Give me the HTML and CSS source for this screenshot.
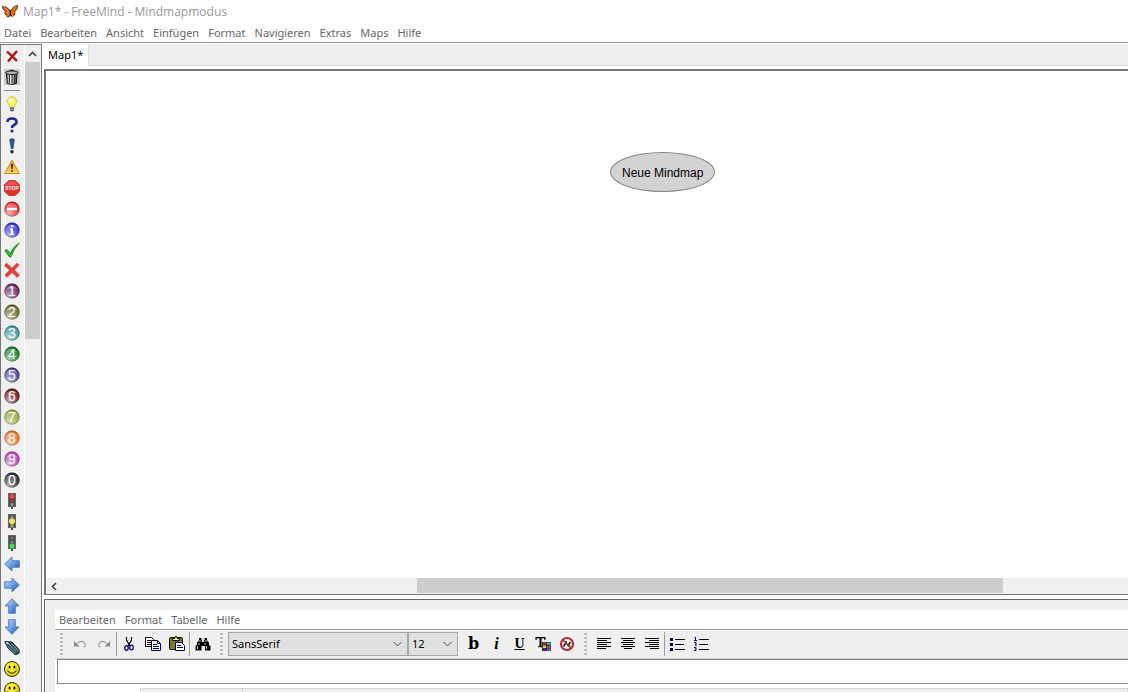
FILE: index.html
```html
<!DOCTYPE html>
<html lang="de">
<head>
<meta charset="utf-8">
<title>Map1* - FreeMind - Mindmapmodus</title>
<link rel="stylesheet" href="styles.css">
</head>
<body>
<svg class="defs" aria-hidden="true">
  <defs>
    <linearGradient id="blue" x1="0" y1="0" x2="1" y2="1"><stop offset="0" stop-color="#c4dcf8"/><stop offset=".5" stop-color="#6c9fe4"/><stop offset="1" stop-color="#1d4fae"/></linearGradient>
    <radialGradient id="shine" cx=".3" cy=".8" r=".8"><stop offset="0" stop-color="#fff" stop-opacity=".65"/><stop offset="1" stop-color="#fff" stop-opacity="0"/></radialGradient>
    <radialGradient id="smile" cx=".4" cy=".35" r=".7"><stop offset="0" stop-color="#fff94a"/><stop offset="1" stop-color="#d9c800"/></radialGradient>
    <linearGradient id="warn" x1="0" y1="0" x2="0" y2="1"><stop offset="0" stop-color="#e88a1c"/><stop offset="1" stop-color="#ffdf5a"/></linearGradient>
    <linearGradient id="can" x1="0" y1="0" x2="1" y2="0"><stop offset="0" stop-color="#666"/><stop offset=".35" stop-color="#fff"/><stop offset="1" stop-color="#333"/></linearGradient>
    <symbol id="ball" viewBox="0 0 16 16"><circle cx="8" cy="8" r="7.6" fill="currentColor"/><circle cx="8" cy="8" r="7.6" fill="url(#shine)"/><circle cx="8" cy="8" r="7.2" fill="none" stroke="#000" stroke-opacity=".22"/><path d="M2.4 6.6a6 6 0 0 1 11.2 0Q8 4.5 2.400 6.600z" fill="#fff" fill-opacity=".25"/></symbol>
    <symbol id="arrow" viewBox="0 0 16 16"><path d="M.7 8 8 1v3.700h7.300v6.600H8V15z" fill="url(#blue)" stroke="#3f6fb8" stroke-width=".8"/></symbol>
    <symbol id="lamp" viewBox="0 0 16 16"><path d="M4 0h8v14h-3v2h-2v-2h-3z" fill="#4a4a4a"/><path d="M4.500 .5h7v13h-7z" fill="none" stroke="#777" stroke-width=".7"/></symbol>
    <symbol id="face" viewBox="0 0 16 16"><circle cx="8" cy="8" r="7.500" fill="url(#smile)" stroke="#37340a"/><ellipse cx="5.600" cy="6" rx="1" ry="1.500"/><ellipse cx="10.400" cy="6" rx="1" ry="1.500"/><path d="M3.500 9.500q4.500 5.500 9 0" fill="none" stroke="#222" stroke-width="1.100"/></symbol>
  </defs>
</svg>

<header class="titlebar">
  <svg class="icon" viewBox="0 0 16 16"><path d="M8.500 7Q5 2 .3 2.500q.2 3.500 2.700 4.500Q2 9.500 5 12.500q2 1.500 3.500-1 1.500 1.500 3 .5 2-2 1.500-4.500Q15.500 5.500 15.800 1.500 11 2 8.500 7z" fill="#cf5c1e" stroke="#5a2c12" stroke-width=".8"/><path d="M2 3.500 7 8M14 3 9.500 8M4 8.500l3 .500M12.500 8 9.500 9M5.500 12 7 9.500M11 12 9.500 9.500" stroke="#f5a14b" stroke-width=".8"/><path d="M8.300 6v6" stroke="#2b1509" stroke-width="1.200"/></svg>
  <h1>Map1* - FreeMind - Mindmapmodus</h1>
</header>
<nav class="menu main-menu">
  <button>Datei</button><button>Bearbeiten</button><button>Ansicht</button><button>Einfügen</button><button>Format</button><button>Navigieren</button><button>Extras</button><button>Maps</button><button>Hilfe</button>
</nav>

<div class="workspace">
  <aside class="palette">
    <div class="palette-icons">
      <button aria-label="Letztes Icon entfernen"><svg class="icon" viewBox="0 0 16 16"><path d="M3 3.500 13 13M13 3 4 13.500" stroke="#b50d0d" stroke-width="2.400"/></svg></button>
      <button aria-label="Alle Icons entfernen"><svg class="icon" viewBox="0 0 16 16"><path d="M0 0h16v16H0z" fill="#ccc"/><path d="M2.500 4.500h10.500l-.700 10q-4.500 2-9 0z" fill="url(#can)" stroke="#111"/><path d="M5.500 6v8M8 6v8.500M10.500 6v8" stroke="#333"/><ellipse cx="7.800" cy="3.700" rx="6.300" ry="1.800" fill="#bbb" stroke="#111"/><path d="M5.500 2q2-2 4.500 0" fill="none" stroke="#111"/></svg></button>
      <hr>
      <button aria-label="Idee"><svg class="icon" viewBox="0 0 16 16"><path d="M8 .5a4.900 4.900 0 0 1 3 8.500l-.8 2H5.800L5 9A4.900 4.900 0 0 1 8 .5z" fill="#fbf46b" stroke="#c9b92e" stroke-width=".8"/><circle cx="6.500" cy="4" r="1.700" fill="#fff"/><path d="M6 11h4v4q-2 1.500-4 0z" fill="#999"/><path d="M6 12.500h4M6 14.500h4" stroke="#555" stroke-width=".7"/></svg></button>
      <button aria-label="Frage"><svg class="icon" viewBox="0 0 16 16"><path d="M3.500 5Q3.500 1.500 8 1.500T12.500 5Q12.500 7 10 8 8 9 8 11" fill="none" stroke="#1a2f85" stroke-width="2.600"/><circle cx="8" cy="14" r="1.600" fill="#1a2f85"/></svg></button>
      <button aria-label="Wichtig"><svg class="icon" viewBox="0 0 16 16"><path d="M5.700 1.500Q8 0 10.300 1.500L9 10.500H7.300z" fill="#235c9e" stroke="#173768" stroke-width=".7"/><circle cx="8" cy="13.700" r="1.800" fill="#163565"/></svg></button>
      <button aria-label="Warnung"><svg class="icon" viewBox="0 0 16 16"><path d="M8 1.200 15.400 14.500H.6z" fill="url(#warn)" stroke="#d78a16" stroke-linejoin="round"/><path d="M7 5h2l-.4 5H7.400zM7.200 11.200h1.700v1.700H7.200z" fill="#222"/></svg></button>
      <button aria-label="Stop"><svg class="icon" viewBox="0 0 16 16"><path d="M4.800.5h6.400l4.300 4.300v6.400l-4.300 4.300H4.800L.5 11.200V4.800z" fill="#e22f2b" stroke="#bd3a36"/><path d="M1.500 5 5 1.500h6L14.500 5z" fill="#fff" fill-opacity=".2"/><text x="8" y="10" class="stop">STOP</text></svg></button>
      <button aria-label="Gesperrt"><svg class="icon red"><use href="#ball"/><path d="M3 6.700h10v2.600H3z" fill="#fff"/></svg></button>
      <button aria-label="Info"><svg class="icon info"><use href="#ball"/><path d="M7 3h2.300v2H7zM6 6.300h3v5.200h1V13H6v-1.500h1V7.800H6z" fill="#fff"/></svg></button>
      <button class="short" aria-label="OK"><svg class="icon" viewBox="0 0 16 16"><path d="M.8 8.500 3 7.500l3 4Q9 5 15.300.8 9.500 7 7 15H5.500z" fill="#2fb62f" stroke="#128012" stroke-width=".8"/></svg></button>
      <button class="short" aria-label="Nicht OK"><svg class="icon" viewBox="0 0 16 16"><path d="M2.500 1 8 6.200 13 1l2.200 2L10.500 8l5 5-2.300 2.500L8 10.500 3 15.300.8 13 5.500 8 .5 3.500z" fill="#e83b3b" stroke="#cf4545" stroke-width=".6"/></svg></button>
      <button aria-label="Priorität 1"><svg class="icon n1"><use href="#ball"/><text x="8" y="13">1</text></svg></button>
      <button aria-label="Priorität 2"><svg class="icon n2"><use href="#ball"/><text x="8" y="13">2</text></svg></button>
      <button aria-label="Priorität 3"><svg class="icon n3"><use href="#ball"/><text x="8" y="13">3</text></svg></button>
      <button aria-label="Priorität 4"><svg class="icon n4"><use href="#ball"/><text x="8" y="13">4</text></svg></button>
      <button aria-label="Priorität 5"><svg class="icon n5"><use href="#ball"/><text x="8" y="13">5</text></svg></button>
      <button aria-label="Priorität 6"><svg class="icon n6"><use href="#ball"/><text x="8" y="13">6</text></svg></button>
      <button aria-label="Priorität 7"><svg class="icon n7"><use href="#ball"/><text x="8" y="13">7</text></svg></button>
      <button aria-label="Priorität 8"><svg class="icon n8"><use href="#ball"/><text x="8" y="13">8</text></svg></button>
      <button aria-label="Priorität 9"><svg class="icon n9"><use href="#ball"/><text x="8" y="13">9</text></svg></button>
      <button aria-label="Priorität 0"><svg class="icon n0"><use href="#ball"/><text x="8" y="13">0</text></svg></button>
      <button aria-label="Ampel rot"><svg class="icon"><use href="#lamp"/><circle cx="8" cy="3.200" r="2.500" fill="#f04545"/><circle cx="8" cy="7.500" r="1.500" fill="#b33"/><circle cx="8" cy="11.300" r="1.500" fill="#79a5a8"/></svg></button>
      <button aria-label="Ampel gelb"><svg class="icon"><use href="#lamp"/><circle cx="8" cy="3" r="1.500" fill="#999"/><circle cx="8" cy="7.200" r="3" fill="#f2e65c"/><circle cx="8" cy="11.700" r="1.700" fill="#aaa15a"/></svg></button>
      <button aria-label="Ampel grün"><svg class="icon"><use href="#lamp"/><circle cx="8" cy="3" r="1.600" fill="#777"/><circle cx="8" cy="7" r="1.600" fill="#6d8a6d"/><circle cx="8" cy="11" r="2.600" fill="#3fdb52"/></svg></button>
      <button aria-label="Zurück"><svg class="icon"><use href="#arrow"/></svg></button>
      <button aria-label="Vor"><svg class="icon" viewBox="0 0 16 16"><path d="M15.300 8 8 1v3.700H.7v6.600H8V15z" fill="url(#blue)" stroke="#3f6fb8" stroke-width=".8"/></svg></button>
      <button aria-label="Hoch"><svg class="icon" viewBox="0 0 16 16"><path d="M8 .7 15 8h-3.700v7.300H4.700V8H1z" fill="url(#blue)" stroke="#3f6fb8" stroke-width=".8"/></svg></button>
      <button aria-label="Runter"><svg class="icon" viewBox="0 0 16 16"><path d="M8 15.300 15 8h-3.700V.7H4.700V8H1z" fill="url(#blue)" stroke="#3f6fb8" stroke-width=".8"/></svg></button>
      <button aria-label="Anhang"><svg class="icon" viewBox="0 0 16 16"><path d="M.8 1.500 8 2l7 7.500q1.500 5-4 5L4 8z" fill="#274b52" stroke="#162f34"/><path d="M4.500 3.500 12.500 12M7.500 3.500l7 7.500M4 6.500l7 7" stroke="#9cc0c2" stroke-width=".9"/><path d="m1.500 2 3 .500L4.200 5z" fill="#e5eeee"/></svg></button>
      <button aria-label="Lächeln"><svg class="icon"><use href="#face"/></svg></button>
      <button aria-label="Freude"><svg class="icon"><use href="#face"/></svg></button>
    </div>
    <div class="vscroll">
      <button aria-label="Nach oben"><svg width="9" height="6" viewBox="0 0 9 6"><path d="M1 5 4.500 1.500 8 5" fill="none" stroke="#444" stroke-width="1.700"/></svg></button>
      <div class="vtrack"><div class="vthumb"></div></div>
    </div>
  </aside>

  <main class="documents">
    <div class="tabs"><button class="tab">Map1*</button></div>
    <section class="map-pane">
      <div class="canvas"><div class="node">Neue Mindmap</div></div>
      <div class="hscroll">
        <button aria-label="Nach links"><svg width="6" height="9" viewBox="0 0 6 9"><path d="M5 1 1.500 4.500 5 8" fill="none" stroke="#444" stroke-width="1.700"/></svg></button>
        <div class="htrack"><div class="hthumb"></div></div>
      </div>
    </section>

    <section class="editor">
      <nav class="menu note-menu"><button>Bearbeiten</button><button>Format</button><button>Tabelle</button><button>Hilfe</button></nav>
      <div class="toolbar">
        <span class="grip"></span>
        <button aria-label="Rückgängig"><svg class="icon" viewBox="0 0 16 16"><path d="M4 8q4-4 8-2Q15 8 12 11.500" fill="none" stroke="#8c8c8c"/><path d="M2 5v5.500h5.500z" fill="#8c8c8c"/></svg></button>
        <button aria-label="Wiederholen"><svg class="icon" viewBox="0 0 16 16"><path d="M12 8Q8 4 4 6 1 8 4 11.500" fill="none" stroke="#8c8c8c"/><path d="M14 5v5.500H8.500z" fill="#8c8c8c"/></svg></button>
        <span class="sep"></span>
        <button aria-label="Ausschneiden"><svg class="icon" viewBox="0 0 16 16"><path d="M5.500 1v3L9 10M10.500 1v3L7 10" fill="none" stroke="#000" stroke-width="1.200"/><ellipse cx="5.500" cy="12" rx="1.800" ry="2.300" fill="none" stroke="#00007c" stroke-width="1.200"/><ellipse cx="10.500" cy="11.500" rx="1.800" ry="2.300" fill="none" stroke="#00007c" stroke-width="1.200"/></svg></button>
        <button aria-label="Kopieren"><svg class="icon" viewBox="0 0 16 16"><path d="M.5 1.500h6l2 2v7h-8z" fill="#fff" stroke="#000"/><path d="M2 4.500h4M2 6.500h4M2 8.500h4" stroke="#000"/><path d="M6.500 4.500h6l3 3v7h-9z" fill="#fff" stroke="#00007c"/><path d="M12.500 4.500v3h3M8 8.500h4M8 10.500h6M8 12.500h6" fill="none" stroke="#00007c"/></svg></button>
        <button aria-label="Einfügen"><svg class="icon" viewBox="0 0 16 16"><rect x=".5" y="1.500" width="13" height="12" rx="1" fill="#7c7c16" stroke="#000"/><path d="M3.500 3.500v-1h2q0-2 1.500-2t1.500 2h2v2h-7z" fill="#e8e58a" stroke="#000"/><path d="M6.500 6.500h6l3 3v5h-9z" fill="#fff" stroke="#00007c"/><path d="M8 9.500h4M8 11.500h6" stroke="#00007c"/></svg></button>
        <span class="sep"></span>
        <button class="find" aria-label="Suchen"><svg class="icon" viewBox="0 0 16 16"><path d="M4 2h2.500v2H7v2h2V4h.5V2H12v2l1 2h1v3l1.500 1v4.500H10V10H6.500v4.500H.5V10L2 9V6h1l1-2z"/><path d="M5 4v2M4 7v2M2.500 10v3M11 4v2M10 7v2M11.500 10v3" stroke="#fff" stroke-width=".8"/></svg></button>
        <span class="grip"></span>
        <div class="combos">
          <select class="font-family" aria-label="Schriftart"><option>SansSerif</option></select>
          <select class="font-size" aria-label="Schriftgröße"><option>12</option></select>
        </div>
        <button class="letter bold">b</button>
        <button class="letter italic">i</button>
        <button class="letter under">U</button>
        <button aria-label="Schriftfarbe"><svg class="icon" viewBox="0 0 16 16"><path d="M.500 1h10v3H9.500L9 2.300H6.500V10L8 10.500V11.300H3v-.8L4.500 10V2.300H2L1.500 4h-1z"/><path d="M7 6h9v9H7z" fill="#333"/><path d="M8 6.500h3v2H8z" fill="#d22"/><path d="M12 6.500h3.500v2.500H12z" fill="#29b8b8"/><path d="M8 9.500h3V12H8z" fill="#e8d926"/><path d="M12 10h3.500v2H12z" fill="#b23c80"/><path d="M8 12.500h3V15H8z" fill="#2b2b9c"/><path d="M12 12.500h3.500V15H12z" fill="#8a45b8"/></svg></button>
        <button aria-label="Formatierung entfernen"><svg class="icon" viewBox="0 0 16 16"><circle cx="8" cy="8" r="6" fill="#fff" stroke="#b72d35" stroke-width="2.200"/><path d="M4.500 10.500 7.500 6M8.500 10l3-4M6 6h2M9 10h2" stroke="#111" stroke-width="1.500"/><path d="m4 4 8 8" stroke="#b72d35" stroke-width="1.700"/></svg></button>
        <span class="grip"></span>
        <button aria-label="Linksbündig"><svg class="icon" viewBox="0 0 16 16"><path d="M1 2.500h14M1 4.500h10M1 6.500h14M1 8.500h10M1 10.500h14M1 12.500h9" stroke="#000"/></svg></button>
        <button aria-label="Zentriert"><svg class="icon" viewBox="0 0 16 16"><path d="M1 2.500h14M3 4.500h10M1 6.500h14M3 8.500h10M1 10.500h14M4 12.500h8" stroke="#000"/></svg></button>
        <button aria-label="Rechtsbündig"><svg class="icon" viewBox="0 0 16 16"><path d="M1 2.500h14M5 4.500h10M1 6.500h14M5 8.500h10M1 10.500h14M6 12.500h9" stroke="#000"/></svg></button>
        <span class="sep"></span>
        <button aria-label="Aufzählung"><svg class="icon" viewBox="0 0 16 16"><path d="M1 2h3v3H1zM1 7h3v3H1zM1 12h3v3H1z" fill="#00006e"/><path d="M6 3.500h10M6 8.500h9M6 13.500h10" stroke="#000"/></svg></button>
        <button aria-label="Nummerierung"><svg class="icon" viewBox="0 0 16 16"><path d="M1.500 1.500h1V5M1 4.500h3M1 6.500h2v1.500l-1 1h2M1 11.500h2v3H1M2 13h1" fill="none" stroke="#00006e"/><path d="M6 3.500h10M6 8.500h9M6 13.500h10" stroke="#000"/></svg></button>
      </div>
      <div class="note"><input type="text" aria-label="Notiz"></div>
      <div class="view-tabs"><span></span><span></span><span></span></div>
    </section>
  </main>
</div>
</body>
</html>
```

FILE: styles.css
```css
* { box-sizing: border-box; }
body {
  margin: 0;
  height: 100vh;
  overflow: hidden;
  display: flex;
  flex-direction: column;
  background: #fff;
  font: 12px/16px "Open Sans", "Noto Sans", sans-serif;
  color: #000;
}
button {
  border: 0;
  padding: 0;
  background: none;
  font: inherit;
  color: inherit;
}
.defs { position: absolute; width: 0; height: 0; }
.icon { display: block; width: 16px; height: 16px; flex: none; }

.titlebar {
  flex: none;
  height: 23px;
  display: flex;
  align-items: center;
  gap: 5px;
  padding: 0 2px;
  color: #999;
}
.titlebar h1 { margin: 0; font-size: 12px; font-weight: 400; }

.menu {
  display: flex;
  align-items: center;
  gap: 9px;
  flex: none;
  padding: 0 4px;
  color: #666;
  font: 11px/16px "Noto Sans", sans-serif;
}
.menu button { white-space: nowrap; }
.main-menu { height: 20px; border-bottom: 1px solid #999; }

.workspace { flex: 1; min-height: 0; display: flex; padding-top: 1px; }

.palette {
  flex: none;
  width: 42px;
  display: flex;
  border: solid #777;
  border-width: 1px 1px 0;
  background: #f0f0f0;
  overflow: hidden;
}
.palette-icons { width: 24px; flex: none; border-right: 1px solid #fff; }
.palette-icons button { display: flex; width: 22px; height: 21px; align-items: center; justify-content: center; }
.palette-icons .short { height: 20px; }
.palette-icons hr { width: 16px; height: 1px; margin: 3px 3px 2px; border: 0; background: #888; }
.palette text { fill: #fff; font: 14px "Liberation Sans", sans-serif; text-anchor: middle; }
.palette .stop { font-size: 5px; font-weight: 700; }
.red { color: #e62020; }
.info { color: #2a2ad8; }
.n1 { color: #5f1755; }
.n2 { color: #696220; }
.n3 { color: #2f8f95; }
.n4 { color: #087d1e; }
.n5 { color: #3b3a96; }
.n6 { color: #620c14; }
.n7 { color: #93a336; }
.n8 { color: #ea6a1c; }
.n9 { color: #b833b0; }
.n0 { color: #222; }

.vscroll { flex: 1; display: flex; flex-direction: column; margin-right: 1px; }
.vscroll button { height: 17px; flex: none; display: flex; align-items: center; justify-content: center; }
.vtrack { flex: 1; }
.vthumb { height: 44%; background: #cdcdcd; }

.documents { flex: 1; min-width: 0; display: flex; flex-direction: column; padding-left: 2px; }
.tabs { flex: none; height: 22px; display: flex; margin-bottom: 3px; background: #efefef; border-bottom: 1px solid #ddd; margin-left: -1px; }
.tab { background: #fff; height: 22px; padding: 0 5px; border-right: 1px solid #ddd; font: 11px/16px "Noto Sans", sans-serif; }
.map-pane {
  flex: 1;
  min-height: 0;
  display: flex;
  flex-direction: column;
  border: solid #777;
  border-width: 2px 0 1px 2px;
}
.canvas { flex: 1; position: relative; }
.node {
  position: absolute;
  left: 564px;
  top: 81px;
  padding: 12px 11px 10px;
  border: 1px solid #858585;
  border-radius: 50%;
  background: #d3d3d3;
  font-family: "Liberation Sans", sans-serif;
  white-space: nowrap;
}
.hscroll { flex: none; height: 16px; display: flex; background: #f0f0f0; }
.hscroll button { width: 16px; display: flex; align-items: center; justify-content: center; }
.htrack { flex: 1; }
.hthumb { width: 55%; height: 15px; margin-left: 33.3%; background: #cdcdcd; }

.editor {
  flex: none;
  margin-top: 4px;
  padding: 10px 0 0 10px;
  border: solid #666;
  border-width: 1px 0 0 1px;
  background: #efefef;
}
.note-menu { height: 20px; background: #fff; border-bottom: 1px solid #999; }
.toolbar { display: flex; align-items: center; height: 29px; padding-bottom: 1px; border-top: 1px solid #fff; border-bottom: 1px solid #ccc; }
.toolbar button { width: 24px; height: 24px; flex: none; display: flex; align-items: center; justify-content: center; }
.toolbar .find { width: 25px; padding-left: 1px; }
.grip { flex: none; width: 3px; height: 22px; margin: 0 5px; background: repeating-linear-gradient(#bbb 0 2px, transparent 2px 4px); }
.sep { flex: none; width: 1px; height: 24px; background: #999; }
.combos { display: flex; padding-right: 4px; }
.combos select {
  appearance: none;
  height: 24px;
  padding: 0 3px;
  border: 1px solid #a5a8a8;
  border-radius: 0;
  color: #000;
  font: 11px/16px "Noto Sans", sans-serif;
  background: #e0e0e0 url("data:image/svg+xml,%3Csvg xmlns='http://www.w3.org/2000/svg' width='9' height='6'%3E%3Cpath d='M.5 1l4 4 4-4' fill='none' stroke='%23555'/%3E%3C/svg%3E") no-repeat right 5px center;
}
.combos .font-family { width: 180px; }
.combos .font-size { width: 50px; }
.toolbar .letter { width: 23px; font: 16px/20px "Liberation Serif", serif; }
.toolbar .bold { font-family: "DejaVu Serif", serif; font-weight: 700; }
.toolbar .italic { font-style: italic; font-weight: 700; }
.toolbar .under { font-size: 14px; font-weight: 700; text-decoration: underline; }
.note { background: #fff; padding: 0 0 4px 2px; }
.note input { display: block; width: 100%; height: 25px; border: 1px solid #888; border-right: 0; padding: 0 4px; font: inherit; outline: 0; }
.view-tabs { display: flex; height: 4px; }
.view-tabs span { border-top: 1px solid #d5d5d5; border-right: 1px solid #d5d5d5; width: 102px; }
.view-tabs span:first-child { width: 86px; background: #fff; border-top-color: #fff; }
.view-tabs span:last-child { flex: 1; }
```
